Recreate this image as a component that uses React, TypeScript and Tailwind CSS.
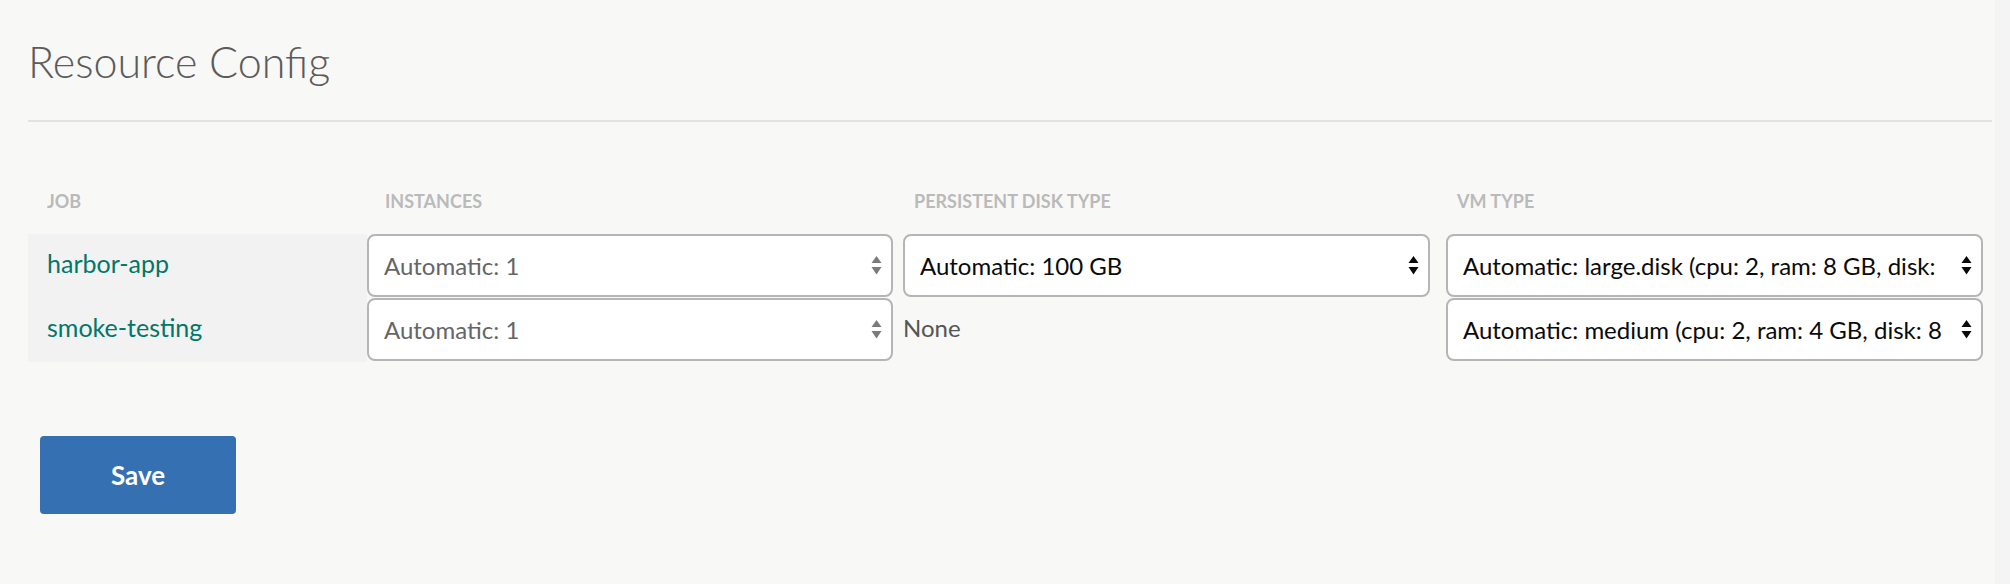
import React from "react";

function Arrows({ color }: { color: string }) {
  return (
    <svg width="11" height="19" viewBox="0 0 11 19" className="shrink-0" fill={color}>
      <polygon points="0.5,7 5.5,0 10.5,7" />
      <polygon points="0.5,11 10.5,11 5.5,18.5" />
    </svg>
  );
}

function FakeSelect({
  text,
  width,
  muted,
}: {
  text: string;
  width: string;
  muted?: boolean;
}) {
  return (
    <div
      className={`${width} h-[63px] shrink-0 rounded-[8px] border-2 border-[#b5b5b5] bg-white flex items-center pl-[15px] pr-[9px]`}
    >
      <span
        className={`flex-1 min-w-0 whitespace-nowrap text-[24px] leading-[30px] ${
          muted ? "text-[#666666]" : "text-[#0a0a0a]"
        }`}
      >
        {text}
      </span>
      <span className="ml-[8px] flex items-center">
        <Arrows color={muted ? "#7a7a7a" : "#0a0a0a"} />
      </span>
    </div>
  );
}

export default function App() {
  const rows = [
    {
      job: "harbor-app",
      disk: "Automatic: 100 GB",
      vm: "Automatic: large.disk (cpu: 2, ram: 8 GB, disk:",
    },
    {
      job: "smoke-testing",
      disk: null as string | null,
      vm: "Automatic: medium (cpu: 2, ram: 4 GB, disk: 8",
    },
  ];

  return (
    <div className="w-full h-[584px] bg-[#f8f8f7] font-['Lato',sans-serif] flex">
      <div className="w-[1995px] shrink-0 pl-[28px] pr-[3px]">
        <h1 className="pt-[40px] text-[43px] leading-[44px] font-light text-[#5b5b5b]">
          Resource Config
        </h1>
        <div className="mt-[36px] h-[2px] bg-[#e2e2e2]" />

        <div className="mt-[70px] flex h-[18px] text-[18px] leading-[18px] font-bold text-[#bababa]">
          <div className="w-[339px] pl-[19px]">JOB</div>
          <div className="w-[536px] pl-[18px]">INSTANCES</div>
          <div className="w-[543px] pl-[11px]">PERSISTENT DISK TYPE</div>
          <div className="pl-[11px]">VM TYPE</div>
        </div>

        <div className="mt-[24px] flex flex-col">
          {rows.map((r) => (
            <div key={r.job} className="flex h-[64px]">
              <div className="w-[339px] shrink-0 bg-[#f2f2f2] flex items-center pl-[19px] pb-[6px]">
                <span className="text-[25px] leading-[30px] text-[#00776b]">{r.job}</span>
              </div>
              <div className="w-[536px] shrink-0">
                <FakeSelect text="Automatic: 1" width="w-[526px]" muted />
              </div>
              <div className="w-[543px] shrink-0">
                {r.disk ? (
                  <FakeSelect text={r.disk} width="w-[527px]" />
                ) : (
                  <div className="h-[63px] flex items-center pb-[4px] text-[24px] leading-[30px] text-[#555555]">
                    None
                  </div>
                )}
              </div>
              <div className="shrink-0">
                <FakeSelect text={r.vm} width="w-[537px]" />
              </div>
            </div>
          ))}
        </div>

        <button className="mt-[74px] ml-[12px] w-[196px] h-[78px] rounded-[4px] bg-[#3571b2] text-white text-[26px] font-bold flex items-center justify-center">
          Save
        </button>
      </div>
      <div className="flex-1 bg-[#f4f4f4]" />
    </div>
  );
}
